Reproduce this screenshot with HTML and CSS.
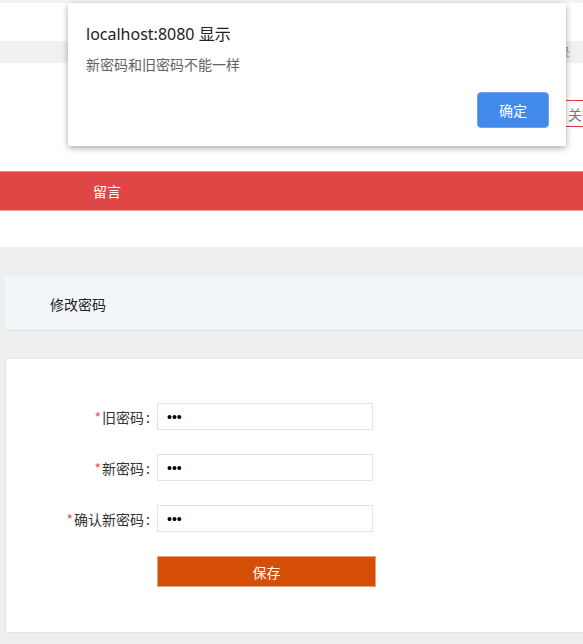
FILE: index.html
```html
<!DOCTYPE html>
<html lang="zh-CN">
<head>
<meta charset="utf-8">
<title>修改密码</title>
<link rel="stylesheet" href="styles.css">
</head>
<body>
<div class="page">
  <div class="topstrip"></div>
  <div class="topgap"></div>
  <div class="topbar"><span class="toplink">登录</span></div>
  <div class="header">
    <div class="search"><span class="search-ph">关键字</span></div>
  </div>
  <nav class="nav"><span class="nav-item">留言</span></nav>
  <div class="navgap"></div>
  <main class="main">
    <div class="panel-head">修改密码</div>
    <div class="card">
      <form class="form">
        <div class="row">
          <label class="label"><span class="req">*</span>旧密码<span class="colon">:</span></label>
          <input class="input" type="password" value="123">
        </div>
        <div class="row">
          <label class="label"><span class="req">*</span>新密码<span class="colon">:</span></label>
          <input class="input" type="password" value="123">
        </div>
        <div class="row">
          <label class="label"><span class="req">*</span>确认新密码<span class="colon">:</span></label>
          <input class="input" type="password" value="123">
        </div>
        <div class="row">
          <span class="label"></span>
          <button class="save" type="button">保存</button>
        </div>
      </form>
    </div>
  </main>
</div>

<div class="dialog">
  <div class="dialog-title">localhost:8080 显示</div>
  <div class="dialog-msg">新密码和旧密码不能一样</div>
  <div class="dialog-actions"><button class="dialog-btn" type="button">确定</button></div>
</div>
</body>
</html>
```

FILE: styles.css
```css
html, body {
  margin: 0;
  padding: 0;
  overflow: hidden;
}
body {
  background: #efefef;
  font-family: "Noto Sans CJK SC", "Noto Sans", sans-serif;
  font-size: 14px;
  color: #333;
  width: 583px;
  height: 644px;
  position: relative;
}
.page {
  display: flex;
  flex-direction: column;
}
.topstrip {
  height: 3px;
  background: #f3f3f3;
}
.topgap {
  height: 38px;
  background: #fff;
}
.topbar {
  height: 22px;
  background: #f0f0f0;
  display: flex;
  justify-content: flex-end;
  align-items: center;
  overflow: hidden;
}
.toplink {
  font-size: 12px;
  color: #999;
  margin-right: 13px;
  line-height: 22px;
}
.header {
  height: 108px;
  background: #fff;
  position: relative;
  display: flex;
  justify-content: flex-end;
  align-items: flex-start;
  overflow: hidden;
}
.search {
  margin-top: 37px;
  margin-right: -126px;
  width: 140px;
  height: 25px;
  border: 1px solid #e03c3c;
  display: flex;
  align-items: center;
  padding-left: 12px;
  box-sizing: content-box;
  flex-shrink: 0;
}
.search-ph {
  color: #777;
  font-size: 14px;
}
.nav {
  height: 38px;
  background: #df4646;
  border-top: 1px solid #ec8b8b;
  border-bottom: 1px solid #f09a9a;
  display: flex;
  align-items: center;
}
.nav-item {
  color: #fff;
  padding-left: 93px;
  font-size: 14px;
}
.navgap {
  height: 36px;
  background: #fff;
}
.main {
  padding: 30px 0 0 5px;
  display: flex;
  flex-direction: column;
}
.panel-head {
  height: 53px;
  background: #f3f6f9;
  border-bottom: 1px solid #e1e3e5;
  display: flex;
  align-items: center;
  padding-left: 45px;
  font-size: 14px;
  color: #222;
}
.card {
  margin-top: 27px;
  background: #fff;
  border: 1px solid #e4e4e4;
  border-right: none;
  height: 275px;
  box-sizing: border-box;
}
.form {
  padding-top: 44px;
  display: flex;
  flex-direction: column;
  gap: 24px;
}
.row {
  display: flex;
  align-items: center;
}
.label {
  width: 144px;
  text-align: right;
  font-size: 14px;
  color: #333;
  margin-right: 7px;
  flex-shrink: 0;
}
.req {
  color: #f05050;
  margin-right: 1px;
}
.colon {
  margin-left: 2px;
}
.input {
  width: 216px;
  height: 27px;
  box-sizing: border-box;
  border: 1px solid #e3e3e3;
  padding: 0 9px;
  font-size: 14px;
  font-family: "Liberation Sans", sans-serif;
  color: #000;
  outline: none;
  margin: 0;
}
.save {
  width: 219px;
  height: 31px;
  box-sizing: border-box;
  border: 1px solid #e9a47e;
  background: #d54e06;
  color: #fff;
  font-size: 14px;
  font-family: "Noto Sans CJK SC", sans-serif;
  padding: 0;
}
.dialog {
  position: absolute;
  left: 68px;
  top: 3px;
  width: 498px;
  height: 143px;
  box-sizing: border-box;
  background: #fff;
  border-radius: 2px;
  box-shadow: 0 2px 6px rgba(0,0,0,0.35);
  padding: 20px 17px 18px 18px;
  display: flex;
  flex-direction: column;
}
.dialog-title {
  font-family: "Noto Sans", "Noto Sans CJK SC", sans-serif;
  font-size: 16px;
  color: #222;
  line-height: 22px;
}
.dialog-msg {
  margin-top: 9px;
  font-size: 14px;
  color: #5f6368;
  line-height: 20px;
}
.dialog-actions {
  margin-top: auto;
  display: flex;
  justify-content: flex-end;
}
.dialog-btn {
  width: 72px;
  height: 36px;
  border: 1px solid #6aa5ef;
  border-radius: 4px;
  background: #418aea;
  color: #fff;
  font-size: 14px;
  font-family: "Noto Sans CJK SC", sans-serif;
  padding: 0;
}
```
